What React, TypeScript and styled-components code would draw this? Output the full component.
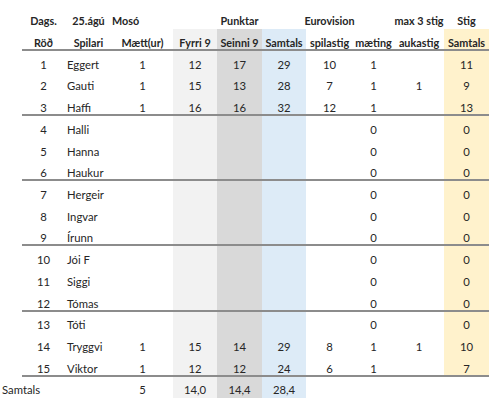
import React from "react";
import styled, { createGlobalStyle, css } from "styled-components";

const Global = createGlobalStyle`
  html, body { margin: 0; padding: 0; background: #fff; }
  body { font-family: Lato, "Open Sans", sans-serif; color: #262626; }
`;

const COLS = "22px 43px 47px 61px 44px 45px 44px 47px 41px 50px 45px";

type Shade = "light" | "mid" | "blue" | "yellow" | undefined;
const shades: Record<string, string> = {
  light: "#f2f2f2",
  mid: "#d9d9d9",
  blue: "#ddebf7",
  yellow: "#fff2cc",
};

const Sheet = styled.div`
  padding-top: 7.5px;
  width: 500px;
`;

const Row = styled.div<{ $rule?: boolean }>`
  display: grid;
  grid-template-columns: ${COLS};
  height: 21.73px;
  ${(p) =>
    p.$rule &&
    css`
      & > *:not(:first-child) {
        box-shadow: inset 0 -2px 0 #8c8c8c;
      }
    `}
`;

const Cell = styled.div<{
  $align?: "left" | "center";
  $shade?: Shade;
  $bold?: boolean;
  $pad?: number;
  $span?: number;
}>`
  display: flex;
  align-items: flex-end;
  justify-content: ${(p) => (p.$align === "left" ? "flex-start" : "center")};
  padding: 0 0 1px ${(p) => p.$pad ?? 0}px;
  font-size: ${(p) => (p.$bold ? "10.8px" : "11.3px")};
  line-height: 14px;
  font-weight: ${(p) => (p.$bold ? 700 : 400)};
  background: ${(p) => (p.$shade ? shades[p.$shade] : "transparent")};
  white-space: nowrap;
  overflow: visible;
  min-width: 0;
  ${(p) => p.$span && css`grid-column: span ${p.$span};`}
`;

type R = (string | number)[];
const data: R[] = [
  [1, "Eggert", 1, 12, 17, 29, 10, 1, "", 11],
  [2, "Gauti", 1, 15, 13, 28, 7, 1, 1, 9],
  [3, "Haffi", 1, 16, 16, 32, 12, 1, "", 13],
  [4, "Halli", "", "", "", "", "", 0, "", 0],
  [5, "Hanna", "", "", "", "", "", 0, "", 0],
  [6, "Haukur", "", "", "", "", "", 0, "", 0],
  [7, "Hergeir", "", "", "", "", "", 0, "", 0],
  [8, "Ingvar", "", "", "", "", "", 0, "", 0],
  [9, "Írunn", "", "", "", "", "", 0, "", 0],
  [10, "Jói F", "", "", "", "", "", 0, "", 0],
  [11, "Siggi", "", "", "", "", "", 0, "", 0],
  [12, "Tómas", "", "", "", "", "", 0, "", 0],
  [13, "Tóti", "", "", "", "", "", 0, "", 0],
  [14, "Tryggvi", 1, 15, 14, 29, 8, 1, 1, 10],
  [15, "Viktor", 1, 12, 12, 24, 6, 1, "", 7],
];

const colShade: Shade[] = [
  undefined,
  undefined,
  undefined,
  "light",
  "mid",
  "blue",
  undefined,
  undefined,
  undefined,
  "yellow",
];

export default function App() {
  return (
    <>
      <Global />
      <Sheet>
        <Row>
          <Cell />
          <Cell $bold>Dags.</Cell>
          <Cell $bold>25.ágú</Cell>
          <Cell $bold $align="left" $pad={0}>
            Mosó
          </Cell>
          <Cell $bold $span={3}>
            Punktar
          </Cell>
          <Cell $bold>Eurovision</Cell>
          <Cell />
          <Cell $bold>max 3 stig</Cell>
          <Cell $bold>Stig</Cell>
        </Row>
        <Row $rule>
          <Cell />
          <Cell $bold>Röð</Cell>
          <Cell $bold>Spilari</Cell>
          <Cell $bold>Mætt(ur)</Cell>
          <Cell $bold $shade="light">
            Fyrri 9
          </Cell>
          <Cell $bold $shade="mid">
            Seinni 9
          </Cell>
          <Cell $bold $shade="blue">
            Samtals
          </Cell>
          <Cell $bold>spilastig</Cell>
          <Cell $bold>mæting</Cell>
          <Cell $bold>aukastig</Cell>
          <Cell $bold $shade="yellow">
            Samtals
          </Cell>
        </Row>
        {data.map((r, i) => (
          <Row key={i} $rule={i % 3 === 2}>
            <Cell />
            {r.map((v, j) => (
              <Cell
                key={j}
                $shade={colShade[j]}
                $align={j === 1 ? "left" : "center"}
                $pad={j === 1 ? 2 : 0}
              >
                {v}
              </Cell>
            ))}
          </Row>
        ))}
        <Row>
          <Cell $align="left" $pad={2}>
            Samtals
          </Cell>
          <Cell />
          <Cell />
          <Cell>5</Cell>
          <Cell $shade="light">14,0</Cell>
          <Cell $shade="mid">14,4</Cell>
          <Cell $shade="blue">28,4</Cell>
          <Cell />
          <Cell />
          <Cell />
          <Cell />
        </Row>
      </Sheet>
    </>
  );
}
